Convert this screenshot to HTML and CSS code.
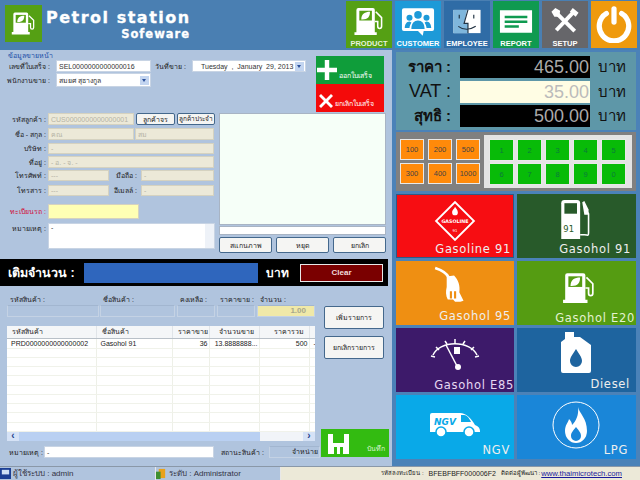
FILE: index.html
```html
<!DOCTYPE html>
<html lang="th">
<head>
    <meta charset="UTF-8">
    <title>Petrol station</title>
    <link rel="stylesheet" href="styles.css">
</head>
<body>
<svg class="defs" width="0" height="0">
    <symbol id="pump" viewBox="0 0 32 32">
        <path fill="#fff" d="M5 2h15a2 2 0 0 1 2 2v23H3V4a2 2 0 0 1 2-2zM1 27h23v3H1z"/>
        <path fill="currentColor" d="M6 5h13v10H6z"/>
        <path fill="#fff" d="M8 14c0-6 4-8 9-8 0 5-2 8-8 8z"/>
        <path fill="none" stroke="#fff" stroke-width="1.6" d="M23 6l6 6v9c0 3-4 3-4 0v-5h-3"/>
    </symbol>
</svg>

<header class="top">
    <svg class="logo"><use href="#pump" x="6" y="5" width="25" height="27"/></svg>
    <div class="brand">
        <div class="brand-main">Petrol station</div>
        <div class="brand-sub">Sofeware</div>
    </div>
    <nav class="nav">
        <a class="nav-item nav-product">
            <svg class="nav-icon" viewBox="0 0 32 32"><use href="#pump"/></svg>
            <span>PRODUCT</span>
        </a>
        <a class="nav-item nav-customer">
            <svg class="nav-icon" viewBox="0 0 36 32">
                <path fill="#fff" d="M3 2h30a2 2 0 0 1 2 2v20a2 2 0 0 1-2 2H24l-1 5-5-5H3a2 2 0 0 1-2-2V4a2 2 0 0 1 2-2z"/>
                <g fill="#1d9ad8"><circle cx="18" cy="9" r="4"/><circle cx="9" cy="12" r="3.2"/><circle cx="27" cy="12" r="3.2"/><path d="M11 24c0-6 3-9 7-9s7 3 7 9zM4 23c0-4 2-7 5-7l2 1c-1 2-2 4-2 6zM32 23c0-4-2-7-5-7l-2 1c1 2 2 4 2 6z"/></g>
            </svg>
            <span>CUSTOMER</span>
        </a>
        <a class="nav-item nav-employee">
            <svg class="nav-icon" viewBox="0 0 32 32">
                <path fill="#fff" d="M2 4h28v24H2z"/>
                <path fill="#7fb6dc" d="M2 4h14l-3 14h4v10H2z"/>
                <path fill="none" stroke="#234" stroke-width="1.2" d="M17 4l-4 14h4v10M8 9v4M23 9v4M7 21c5 4 12 4 18 0"/>
            </svg>
            <span>EMPLOYEE</span>
        </a>
        <a class="nav-item nav-report">
            <svg class="nav-icon" viewBox="0 0 36 32">
                <path fill="#fff" d="M1 4h34v24H1z"/>
                <path fill="#0f9a50" d="M6 10h24v2.500H6zM6 15h24v2.500H6zM6 20h15v2.500H6z"/>
            </svg>
            <span>REPORT</span>
        </a>
        <a class="nav-item nav-setup">
            <svg class="nav-icon" viewBox="0 0 32 32">
                <path fill="none" stroke="#fff" stroke-width="4" d="M7 7l19 19"/>
                <path fill="none" stroke="#fff" stroke-width="4" d="M26 5L7 25"/>
                <path fill="#fff" d="M2 6l4-4 5 3-1 6-5 0zM24 2l6 5-3 4-6-5z"/>
            </svg>
            <span>SETUP</span>
        </a>
        <a class="nav-item nav-power">
            <svg class="power-icon" viewBox="0 0 40 40">
                <path fill="none" stroke="#fff" stroke-width="5.500" stroke-linecap="round" d="M12 9a15.500 15.500 0 1 0 16 0"/>
                <path fill="none" stroke="#fff" stroke-width="5.500" stroke-linecap="round" d="M20 4v14"/>
            </svg>
        </a>
    </nav>
</header>

<main class="main">
    <section class="left">
        <div class="sale-top">
            <div class="sale-info">
                <div class="group-title">ข้อมูลขายหน้า</div>
                <div class="row row-bill">
                    <label class="lbl lbl-bill">เลขที่ใบเสร็จ :</label>
                    <div class="box box-white w-bill">SEL0000000000000016</div>
                    <label class="lbl lbl-date">วันที่ขาย :</label>
                    <div class="box box-white date">
                        <span>Tuesday &nbsp;, &nbsp;January &nbsp;29, 2013</span>
                        <i class="combo-btn"></i>
                    </div>
                </div>
                <div class="row row-seller">
                    <label class="lbl lbl-bill">พนักงานขาย :</label>
                    <div class="box box-white w-bill seller">
                        <span>สมยศ สุธางกูล</span>
                        <i class="combo-btn"></i>
                    </div>
                </div>
            </div>
            <div class="actions">
                <button class="act act-ok">
                    <svg class="act-icon" viewBox="0 0 18 18"><path fill="#fff" d="M7 0h4v7h7v4h-7v7H7v-7H0V7h7z"/></svg>
                    <span>ออกใบเสร็จ</span>
                </button>
                <button class="act act-cancel">
                    <svg class="act-icon act-x" viewBox="0 0 14 14"><path fill="#fff" d="M2 0l5 5 5-5 2 2-5 5 5 5-2 2-5-5-5 5-2-2 5-5-5-5z"/></svg>
                    <span>ยกเลิกใบเสร็จ</span>
                </button>
            </div>
        </div>

        <div class="cust">
            <div class="cust-form">
                <div class="row r-code">
                    <label class="lbl">รหัสลูกค้า :</label>
                    <div class="box box-ro w-code">CUS0000000000000001</div>
                    <button class="btn btn-a">ลูกค้าจร</button>
                    <button class="btn btn-b">ลูกค้าประจำ</button>
                </div>
                <div class="row r-name">
                    <label class="lbl">ชื่อ - สกุล :</label>
                    <div class="box box-ro w-code">คณ</div>
                    <div class="box box-ro w-last">สม</div>
                </div>
                <div class="row r-comp">
                    <label class="lbl">บริษัท :</label>
                    <div class="box box-ro w-full">-</div>
                </div>
                <div class="row r-addr">
                    <label class="lbl">ที่อยู่ :</label>
                    <div class="box box-ro w-full">- อ. - จ. -</div>
                </div>
                <div class="row r-tel">
                    <label class="lbl">โทรศัพท์ :</label>
                    <div class="box box-ro w-tel">---</div>
                    <label class="lbl lbl-mid">มือถือ :</label>
                    <div class="box box-ro w-mob">-</div>
                </div>
                <div class="row r-fax">
                    <label class="lbl">โทรสาร :</label>
                    <div class="box box-ro w-tel">---</div>
                    <label class="lbl lbl-mid">อีเมลล์ :</label>
                    <div class="box box-ro w-mob">-</div>
                </div>
                <div class="row r-plate">
                    <label class="lbl lbl-red">ทะเบียนรถ :</label>
                    <div class="box box-plate"></div>
                </div>
                <div class="row r-note">
                    <label class="lbl">หมายเหตุ :</label>
                    <div class="box box-white note">-<i class="note-bar"></i></div>
                </div>
            </div>
            <div class="cust-side">
                <div class="scan-view"></div>
                <div class="scan-input"></div>
                <div class="scan-btns">
                    <button class="btn">สแกนภาพ</button>
                    <button class="btn">หยุด</button>
                    <button class="btn">ยกเลิก</button>
                </div>
            </div>
        </div>

        <div class="fill-bar">
            <strong class="fill-label">เติมจำนวน :</strong>
            <div class="fill-value"></div>
            <strong class="fill-unit">บาท</strong>
            <button class="fill-clear">Clear</button>
        </div>

        <div class="items">
            <div class="items-body">
                <div class="item-entry">
                    <div class="entry e1"><label>รหัสสินค้า :</label><div class="entry-box"></div></div>
                    <div class="entry e2"><label>ชื่อสินค้า :</label><div class="entry-box"></div></div>
                    <div class="entry e3"><label>คงเหลือ :</label><div class="entry-box"></div></div>
                    <div class="entry e4"><label>ราคาขาย :</label><div class="entry-box"></div></div>
                    <div class="entry e5"><label>จำนวน :</label><div class="entry-box entry-qty">1.00</div></div>
                </div>
                <div class="grid-wrap">
                    <table class="grid">
                        <colgroup>
                            <col class="c1"><col class="c2"><col class="c3"><col class="c4"><col class="c5"><col class="c6">
                        </colgroup>
                        <thead>
                            <tr><th>รหัสสินค้า</th><th>ชื่อสินค้า</th><th class="num">ราคาขาย</th><th class="num">จำนวนขาย</th><th class="num">ราคารวม</th><th></th></tr>
                        </thead>
                        <tbody>
                            <tr><td>PRD0000000000000002</td><td>Gasohol 91</td><td class="num">36</td><td class="num">13.8888888...</td><td class="num">500</td><td>-</td></tr>
                            <tr><td></td><td></td><td></td><td></td><td></td><td></td></tr>
                            <tr><td></td><td></td><td></td><td></td><td></td><td></td></tr>
                            <tr><td></td><td></td><td></td><td></td><td></td><td></td></tr>
                            <tr><td></td><td></td><td></td><td></td><td></td><td></td></tr>
                            <tr><td></td><td></td><td></td><td></td><td></td><td></td></tr>
                            <tr><td></td><td></td><td></td><td></td><td></td><td></td></tr>
                            <tr><td></td><td></td><td></td><td></td><td></td><td></td></tr>
                            <tr><td></td><td></td><td></td><td></td><td></td><td></td></tr>
                            <tr><td></td><td></td><td></td><td></td><td></td><td></td></tr>
                        </tbody>
                    </table>
                    <div class="hscroll">
                        <i class="arrow">&lsaquo;</i>
                        <div class="hscroll-thumb"></div>
                        <i class="arrow">&rsaquo;</i>
                    </div>
                </div>
                <div class="item-foot">
                    <label class="foot-lbl">หมายเหตุ :</label>
                    <div class="box box-white foot-note">-</div>
                    <label class="foot-lbl foot-status">สถานะสินค้า :</label>
                    <div class="foot-sell">จำหน่าย</div>
                </div>
            </div>
            <div class="items-side">
                <button class="btn side-btn">เพิ่มรายการ</button>
                <button class="btn side-btn">ยกเลิกรายการ</button>
                <button class="save">
                    <svg class="save-icon" viewBox="0 0 21 20"><path fill="#fff" d="M0 0h5v9h11V0h5v20H0zM6 13v7h3v-7zM12 13v7h3v-7z"/></svg>
                    <span>บันทึก</span>
                </button>
            </div>
        </div>
    </section>

    <section class="right">
        <div class="price">
            <div class="price-row"><span class="price-lbl price-th">ราคา :</span><span class="price-val">465.00</span><span class="price-unit">บาท</span></div>
            <div class="price-row"><span class="price-lbl">VAT :</span><span class="price-val price-vat">35.00</span><span class="price-unit">บาท</span></div>
            <div class="price-row"><span class="price-lbl price-th">สุทธิ :</span><span class="price-val">500.00</span><span class="price-unit">บาท</span></div>
        </div>

        <div class="pad">
            <div class="pad-amount">
                <button class="key key-o">100</button><button class="key key-o">200</button><button class="key key-o">500</button>
                <button class="key key-o">300</button><button class="key key-o">400</button><button class="key key-o">1000</button>
            </div>
            <div class="pad-digits">
                <button class="key key-g">1</button><button class="key key-g">2</button><button class="key key-g">3</button><button class="key key-g">4</button><button class="key key-g">5</button>
                <button class="key key-g">6</button><button class="key key-g">7</button><button class="key key-g">8</button><button class="key key-g">9</button><button class="key key-g">0</button>
            </div>
        </div>

        <div class="fuels">
            <div class="fuel f-g91">
                <svg class="fuel-icon" viewBox="0 0 44 44">
                    <rect x="8" y="8" width="28" height="28" transform="rotate(45 22 22)" fill="none" stroke="#fff" stroke-width="2"/>
                    <path fill="#fff" d="M22 7c1 2 3 3 3 6a3 3 0 0 1-6 0c0-3 2-3 3-6z"/>
                    <text x="22" y="24.500" class="diamond-text">GASOLINE</text>
                    <text x="22" y="34" class="diamond-num">91</text>
                </svg>
                <span>Gasoline 91</span>
            </div>
            <div class="fuel f-g91h">
                <svg class="fuel-icon" viewBox="0 0 30 40">
                    <path fill="#fff" d="M3 1h12a3 3 0 0 1 3 3v34H0V4a3 3 0 0 1 3-3z"/>
                    <path fill="#285a2a" d="M3 4h12v10H3z"/>
                    <text x="2" y="31" class="pump-num">91</text>
                    <path fill="none" stroke="#fff" stroke-width="1.500" d="M18 34h4c3 0 4 2 4-2V14l-3-4"/>
                    <path fill="#fff" d="M20 3l2-1 4 8v5h-4z"/>
                </svg>
                <span>Gasohol 91</span>
            </div>
            <div class="fuel f-g95">
                <svg class="fuel-icon" viewBox="0 0 36 40">
                    <path fill="none" stroke="#fff" stroke-width="2.500" d="M1 2c6 2 11 5 13 9"/>
                    <path fill="#fff" d="M12 10l7-1c4 4 6 10 5 16l4 8-3 1h-5l-2-2h-5c-2-4-2-8-1-12z"/>
                    <path fill="#ef8f12" d="M15 24h2v7h-2zM19 24h2v7h-2z"/>
                </svg>
                <span>Gasohol 95</span>
            </div>
            <div class="fuel f-e20">
                <svg class="fuel-icon f-e20-icon" viewBox="0 0 32 32"><use href="#pump"/></svg>
                <span>Gasohol E20</span>
            </div>
            <div class="fuel f-e85">
                <svg class="fuel-icon" viewBox="0 0 50 34">
                    <path fill="none" stroke="#fff" stroke-width="1.500" d="M3 18a23 16 0 0 1 44 0"/>
                    <path fill="none" stroke="#fff" stroke-width="1.500" d="M1 19l4 1M6 10l3 3M15 4l2 3M25 2v4M35 4l-2 3M44 10l-3 3M49 19l-4 1"/>
                    <path fill="none" stroke="#fff" stroke-width="1.500" d="M16 8l11 21"/>
                    <circle cx="28" cy="30" r="3" fill="#fff"/>
                    <path fill="#fff" d="M24 10h6v7h-6z"/>
                </svg>
                <span>Gasohol E85</span>
            </div>
            <div class="fuel f-diesel">
                <svg class="fuel-icon" viewBox="0 0 32 42">
                    <path fill="#fff" fill-rule="evenodd" d="M5 0h9v5h6l11 8v26a2 2 0 0 1-2 2H3a2 2 0 0 1-2-2V10l4-3zM16 17c-3 5-6 8-6 12a6 6 0 0 0 12 0c0-4-3-7-6-12z"/>
                </svg>
                <span>Diesel</span>
            </div>
            <div class="fuel f-ngv">
                <svg class="fuel-icon" viewBox="0 0 52 26">
                    <path fill="#fff" d="M3 2h28c6 0 11 5 15 12 3 1 5 3 5 6v1H1V4a2 2 0 0 1 2-2z"/>
                    <path fill="#09a9e8" d="M32 4h3c3 0 5 3 7 7H32z"/>
                    <circle cx="12" cy="21" r="5" fill="#fff" stroke="#09a9e8" stroke-width="1.500"/>
                    <circle cx="40" cy="21" r="5" fill="#fff" stroke="#09a9e8" stroke-width="1.500"/>
                    <text x="5" y="14" class="ngv-text">NGV</text>
                </svg>
                <span>NGV</span>
            </div>
            <div class="fuel f-lpg">
                <svg class="fuel-icon" viewBox="0 0 48 48">
                    <circle cx="24" cy="24" r="23" fill="none" stroke="#fff" stroke-width="1"/>
                    <path fill="#fff" fill-rule="evenodd" d="M26 6c1 6 9 11 9 24a11 12 0 0 1-22 0c0-6 3-8 4-12 2 2 3 4 3 6 4-4 7-10 6-18zM24 26c-2 3-5 5-5 9a5 5 0 0 0 10 0c0-4-3-6-5-9z"/>
                </svg>
                <span>LPG</span>
            </div>
        </div>
    </section>
</main>

<footer class="status">
    <div class="status-cell st-user">
        <svg class="st-icon" viewBox="0 0 12 12"><path fill="#1c3f94" d="M0 0h12v12H0z"/><path fill="#cfe0f5" d="M2 2h8v5H2z"/></svg>
        <span>ผู้ใช้ระบบ : admin</span>
    </div>
    <div class="status-cell st-level">
        <svg class="st-icon" viewBox="0 0 12 12"><path fill="#e9a21b" d="M3 1h7v10H3z"/><path fill="#3f8f2f" d="M0 4h5v8H0z"/></svg>
        <span>ระดับ : Administrator</span>
    </div>
    <div class="status-info">
        <span class="status-th">รหัสลงทะเบียน :</span>
        <span class="status-key">BFEBFBFF000006F2</span>
        <span class="status-th">ติดต่อผู้พัฒนา :</span>
        <a class="status-link">www.thaimicrotech.com</a>
    </div>
</footer>
</body>
</html>
```

FILE: styles.css
```css
/* Page */
* {
    box-sizing: border-box;
}
body {
    margin: 0;
    width: 640px;
    height: 480px;
    overflow: hidden;
    background-color: #4b82b8;
    font-family: "Liberation Sans", "Noto Sans", sans-serif;
    font-size: 7px;
    color: #222;
}
button {
    font-family: inherit;
    padding: 0;
    cursor: pointer;
    white-space: nowrap;
}
label {
    white-space: nowrap;
}
.defs {
    display: block;
    height: 0;
}

/* Header */
.top {
    display: flex;
    height: 50px;
    background-color: #4a7fb2;
}
.logo {
    width: 37px;
    height: 37px;
    margin: 5px 0 0 5px;
    color: #55a014;
    background-color: #55a014;
}
.brand {
    width: 144px;
    margin: 8px 0 0 4px;
    color: #fff;
    font-family: "DejaVu Sans", sans-serif;
    font-weight: bold;
    text-align: right;
    -webkit-text-stroke: 0.3px #fff;
}
.brand-main {
    font-size: 16px;
    line-height: 19px;
    letter-spacing: 1.500px;
    white-space: nowrap;
}
.brand-sub {
    font-size: 11.500px;
    line-height: 14px;
    letter-spacing: 1px;
}
.nav {
    display: flex;
    margin-left: auto;
    padding: 1px 3px 0 0;
    gap: 3px;
}
.nav-item {
    display: flex;
    flex-direction: column;
    align-items: center;
    width: 46px;
    height: 47px;
    color: #fff;
    font-family: "Liberation Sans", sans-serif;
    font-size: 7.500px;
    font-weight: bold;
    line-height: 9px;
    padding-top: 5px;
    white-space: nowrap;
}
.nav-icon {
    width: 34px;
    height: 31px;
    margin-bottom: 2px;
}
.nav-product {
    background-color: #55a014;
    color: #e8f3dc;
}
.nav-product .nav-icon {
    color: #55a014;
}
.nav-customer {
    background-color: #1d9ad8;
}
.nav-employee {
    background-color: #2f6ca6;
}
.nav-report {
    background-color: #0f9a50;
}
.nav-setup {
    background-color: #66666a;
}
.nav-power {
    background-color: #ef9a0d;
    padding-top: 4px;
}
.power-icon {
    width: 38px;
    height: 38px;
}

/* Main split */
.main {
    display: flex;
    height: 416px;
}
.left {
    width: 392px;
    background-color: #b0c4de;
}
.right {
    width: 248px;
    padding: 2px 4px 0;
}

/* Form basics */
.row {
    display: flex;
    align-items: center;
}
.lbl {
    width: 46px;
    flex: none;
    margin-right: 2px;
    text-align: right;
}
.box {
    display: flex;
    align-items: center;
    flex: none;
    height: 100%;
    padding-left: 2px;
    overflow: hidden;
    white-space: nowrap;
}
.box-white {
    background-color: #fff;
    border: 1px solid #c8d4e4;
    color: #333;
}
.box-ro {
    background-color: #ece9d8;
    border: 1px solid #d5d2c0;
    color: #b5b3a5;
}
.btn {
    background-color: #f5f5f3;
    border: 1px solid #44688c;
    border-radius: 2px;
    font-size: 7px;
    color: #222;
}

/* Sale header */
.sale-top {
    display: flex;
    height: 62px;
}
.sale-info {
    width: 316px;
}
.group-title {
    height: 10px;
    padding: 2px 0 0 8px;
    color: #1c4fa8;
    line-height: 8px;
}
.row-bill {
    height: 12px;
    margin-bottom: 1px;
}
.row-seller {
    height: 14px;
}
.lbl-bill {
    width: 50px;
    margin-right: 6px;
}
.w-bill {
    width: 95px;
}
.lbl-date {
    width: 35px;
    margin-right: 6px;
}
.date {
    width: 114px;
    justify-content: space-between;
    padding-left: 8px;
    padding-right: 1px;
}
.seller {
    justify-content: space-between;
    padding-right: 1px;
}
.combo-btn {
    width: 9px;
    height: 9px;
    background-color: #c3d5f0;
    position: relative;
}
.combo-btn::after {
    content: "";
    position: absolute;
    left: 2px;
    top: 3px;
    border-left: 2.500px solid transparent;
    border-right: 2.500px solid transparent;
    border-top: 3px solid #2a4f99;
}
.actions {
    width: 68px;
    padding-top: 6px;
}
.act {
    display: flex;
    align-items: flex-end;
    width: 100%;
    height: 28px;
    border: none;
    color: #fff;
    font-size: 7px;
    white-space: nowrap;
    padding: 0 0 3px 0;
}
.act-ok {
    background-color: #0f9d3a;
}
.act-cancel {
    background-color: #f40a0a;
}
.act-icon {
    width: 20px;
    height: 20px;
    flex: none;
    margin: 0 2px 1px 1px;
}
.act-x {
    width: 14px;
    height: 14px;
    margin: 0 2px 1px 3px;
}

/* Customer */
.cust {
    display: flex;
    height: 147px;
    padding-top: 1px;
}
.cust-form {
    width: 219px;
}
.w-code {
    width: 86px;
}
.w-last {
    width: 79px;
    margin-left: 1px;
}
.w-full {
    width: 166px;
}
.w-tel {
    width: 61px;
}
.w-mob {
    width: 73px;
}
.lbl-mid {
    width: 28px;
    margin-right: 4px;
}
.btn-a {
    width: 39px;
    height: 12px;
    margin-left: 2px;
}
.btn-b {
    width: 38px;
    height: 12px;
    margin-left: 2px;
    font-size: 6.500px;
}
.r-code {
    height: 12px;
    margin-bottom: 3px;
}
.r-name {
    height: 12px;
    margin-bottom: 3px;
}
.r-comp {
    height: 11px;
    margin-bottom: 2px;
}
.r-addr {
    height: 12px;
    margin-bottom: 2px;
}
.r-tel {
    height: 11px;
    margin-bottom: 4px;
}
.r-fax {
    height: 11px;
    margin-bottom: 8px;
}
.r-plate {
    height: 15px;
    margin-bottom: 4px;
}
.r-note {
    height: 26px;
    align-items: flex-start;
}
.lbl-red {
    color: #d0103a;
}
.box-plate {
    width: 91px;
    background-color: #ffffb4;
    border: 1px solid #d5d2c0;
}
.note {
    width: 167px;
    position: relative;
    align-items: flex-start;
}
.note-bar {
    position: absolute;
    right: 0;
    top: 0;
    bottom: 0;
    width: 9px;
    background-color: #eef2f8;
}
.cust-side {
    width: 167px;
}
.scan-view {
    height: 112px;
    background-color: #f6fff8;
    border: 1px solid #a8b4c4;
}
.scan-input {
    height: 9px;
    margin-top: 1px;
    background-color: #fff;
    border: 1px solid #a8b4c4;
}
.scan-btns {
    display: flex;
    justify-content: space-between;
    margin-top: 2px;
}
.scan-btns .btn {
    width: 53px;
    height: 16px;
}

/* Black amount bar */
.fill-bar {
    display: flex;
    align-items: center;
    width: 388px;
    height: 27px;
    background-color: #000;
    color: #fff;
}
.fill-label {
    width: 84px;
    padding-left: 8px;
    font-size: 12.500px;
    white-space: nowrap;
}
.fill-value {
    width: 174px;
    height: 20px;
    background-color: #2f66bd;
}
.fill-unit {
    width: 42px;
    padding-left: 8px;
    font-size: 12px;
}
.fill-clear {
    width: 83px;
    height: 18px;
    background-color: #7a0000;
    border: 1px solid #e8e8e8;
    color: #f0dcdc;
    font-size: 8px;
    font-weight: bold;
}

/* Item list */
.items {
    display: flex;
    height: 176px;
    padding: 4px 0 0 7px;
}
.items-body {
    width: 308px;
}
.item-entry {
    display: flex;
    height: 36px;
    gap: 1px;
}
.entry label {
    display: block;
    height: 15px;
    padding: 6px 0 0 3px;
    line-height: 7px;
}
.entry-box {
    height: 12px;
    background-color: #b0c4de;
    border: 1px solid #c4d2e4;
    border-top-color: #a2b6d0;
}
.entry-qty {
    background-color: #f0e9a8;
    color: #a8a88c;
    font-size: 8px;
    font-weight: bold;
    text-align: right;
    padding-right: 8px;
    line-height: 10px;
}
.e1 {
    width: 92px;
}
.e2 {
    width: 75px;
}
.e3 {
    width: 38px;
    margin-left: 1px;
}
.e4 {
    width: 38px;
    margin-left: 1px;
}
.e5 {
    width: 58px;
    margin-left: 1px;
}
.grid-wrap {
    height: 115px;
    background-color: #fff;
    overflow: hidden;
}
.grid {
    width: 308px;
    height: 106px;
    table-layout: fixed;
    border-collapse: collapse;
}
.c1 {
    width: 89px;
}
.c2 {
    width: 76px;
}
.c3 {
    width: 37px;
}
.c4 {
    width: 50px;
}
.c5 {
    width: 50px;
}
.c6 {
    width: 6px;
}
.grid th {
    height: 12px;
    padding: 0 5px;
    font-size: 7px;
    font-weight: normal;
    text-align: left;
    background-color: #f4f6f8;
    border-right: 1px solid #e0e4e8;
    border-bottom: 1px solid #b8c0c8;
    white-space: nowrap;
    overflow: hidden;
}
.grid td {
    height: 9px;
    padding: 0 1px 0 4px;
    line-height: 9px;
    border-right: 1px solid #eef0e8;
    border-bottom: 1px solid #f0f2ea;
    white-space: nowrap;
    overflow: hidden;
}
.grid .num {
    text-align: right;
}
.hscroll {
    display: flex;
    height: 9px;
    background-color: #f1f4f8;
}
.arrow {
    width: 12px;
    color: #24408c;
    font-size: 10px;
    font-style: normal;
    font-weight: bold;
    line-height: 8px;
    text-align: center;
    background-color: #d5e2f6;
}
.hscroll-thumb {
    width: 241px;
    margin-right: auto;
    background-color: #b9d0f2;
}
.item-foot {
    display: flex;
    align-items: center;
    height: 12px;
    margin-top: 5px;
}
.foot-lbl {
    width: 37px;
    flex: none;
    text-align: right;
    margin-right: 1px;
    margin-left: -1px;
}
.foot-note {
    width: 170px;
}
.foot-status {
    width: 43px;
    margin-left: 7px;
    margin-right: 5px;
}
.foot-sell {
    width: 51px;
    height: 12px;
    flex: none;
    text-align: right;
    padding-right: 1px;
    line-height: 10px;
    border: 1px solid #c4d2e4;
    border-top-color: #a2b6d0;
}
.items-side {
    display: flex;
    flex-direction: column;
    width: 70px;
    padding-left: 9px;
}
.side-btn {
    width: 60px;
    height: 23px;
    flex: none;
    margin-top: 16px;
}
.side-btn + .side-btn {
    margin-top: 7px;
}
.save {
    display: flex;
    align-items: flex-end;
    justify-content: space-between;
    flex: none;
    width: 68px;
    height: 28px;
    margin: 70px 0 0 -3px;
    padding: 4px 4px 3px 7px;
    background-color: #33bb11;
    border: none;
    color: #d8f5d0;
    font-size: 7px;
}
.save-icon {
    width: 21px;
    height: 20px;
}

/* Price panel */
.price {
    height: 78px;
    padding: 4px 0 0 0;
    background-color: #5e97a8;
}
.price-row {
    display: flex;
    align-items: center;
    height: 22px;
    margin-bottom: 2.500px;
    font-size: 18px;
    color: #111;
}
.price-lbl {
    width: 64px;
    padding-right: 9px;
    text-align: right;
    white-space: nowrap;
}
.price-th {
    font-size: 15px;
    font-weight: bold;
}
.price-val {
    width: 130px;
    height: 22px;
    background-color: #000;
    color: #aaa;
    font-size: 18px;
    line-height: 22px;
    text-align: right;
    padding-right: 1px;
}
.price-vat {
    background-color: #fffde4;
    color: #bbb;
}
.price-unit {
    margin-left: 8px;
    font-size: 15px;
}

/* Keypad */
.pad {
    display: flex;
    height: 59px;
    margin-top: 2px;
    padding: 3px 4px 3px 4px;
    background-color: #808080;
}
.pad-amount {
    display: grid;
    grid-template-columns: repeat(3, 24px);
    grid-auto-rows: 21px;
    column-gap: 4px;
    row-gap: 3px;
    width: 84px;
    padding-top: 4px;
}
.pad-digits {
    display: grid;
    grid-template-columns: repeat(5, 25px);
    grid-auto-rows: 22px;
    gap: 2px 3px;
    flex: 1;
    padding: 4px 5px;
    background-color: #e4e4e4;
}
.key {
    border: 1px solid #e8e8e8;
    font-size: 7.500px;
    padding: 0;
}
.key-o {
    background-color: #ff8a0a;
    color: #444;
}
.key-g {
    background-color: #08bb08;
    color: #0a7a3c;
}

/* Fuel tiles */
.fuels {
    display: grid;
    grid-template-columns: 118px 119px;
    grid-auto-rows: 64px;
    gap: 3px;
    margin-top: 3px;
}
.fuel {
    display: flex;
    flex-direction: column;
    align-items: center;
    position: relative;
    padding-top: 5px;
    color: #eee;
    font-family: "DejaVu Sans", sans-serif;
    font-size: 11.500px;
    letter-spacing: 0.700px;
    white-space: nowrap;
}
.fuel span {
    position: absolute;
    right: 2px;
    bottom: 1px;
    line-height: 13px;
}
.fuel-icon {
    width: 44px;
    height: 42px;
}
.f-g91 {
    background-color: #f70d12;
    border: 1px solid #2d5a86;
}
.f-g91h {
    background-color: #285a2a;
}
.f-g91h span {
    right: 5px;
    bottom: 2px;
}
.f-g95 {
    background-color: #ef8f12;
    padding-right: 4px;
}
.f-g95 span {
    right: 3px;
    bottom: 2px;
}
.f-e20 {
    background-color: #559c12;
    padding: 10px 0 0 4px;
    color: #e4f2d0;
}
.f-e20 span {
    right: 1px;
    bottom: 0;
}
.f-e20-icon {
    width: 34px;
    height: 34px;
    color: #559c12;
}
.f-e85 {
    background-color: #3d1a6a;
    padding-top: 8px;
    color: #e6d8f2;
}
.f-e85 .fuel-icon {
    width: 50px;
    height: 36px;
}
.f-e85 span {
    right: 0;
    bottom: 0;
}
.f-diesel {
    background-color: #1e649f;
    padding-right: 2px;
    padding-top: 4px;
}
.f-diesel span {
    right: 6px;
}
.f-ngv {
    background-color: #09a9e8;
    padding-top: 16px;
}
.f-ngv .fuel-icon {
    width: 54px;
    height: 26px;
}
.f-ngv span {
    right: 4px;
    bottom: 2px;
}
.f-lpg {
    background-color: #1a86d8;
    padding: 6px 2px 0 0;
}
.f-lpg .fuel-icon {
    width: 48px;
    height: 48px;
}
.f-lpg span {
    right: 8px;
    bottom: 2px;
}
.diamond-text {
    fill: #fff;
    font-size: 5px;
    font-weight: bold;
    text-anchor: middle;
    letter-spacing: 0;
}
.diamond-num {
    fill: #fff;
    font-size: 4px;
    text-anchor: middle;
    letter-spacing: 0;
}
.pump-num {
    fill: #285a2a;
    font-size: 8px;
    letter-spacing: 0;
}
.ngv-text {
    fill: #09a9e8;
    font-size: 9px;
    font-weight: bold;
    font-style: italic;
    letter-spacing: 0;
}

/* Status bar */
.status {
    display: flex;
    height: 14px;
    background-color: #ece9d8;
    border-top: 1px solid #8a98a8;
    font-size: 7px;
    line-height: 13px;
}
.status-cell {
    display: flex;
    align-items: center;
    gap: 2px;
    height: 13px;
    background-color: #b0c4de;
    border-right: 1px solid #e8e8e8;
    font-size: 8px;
    color: #334;
}
.st-user {
    width: 156px;
}
.st-level {
    width: 125px;
}
.st-icon {
    width: 11px;
    height: 11px;
}
.status-info {
    display: flex;
    flex: 1;
    justify-content: flex-end;
    gap: 5px;
    padding-right: 18px;
    white-space: nowrap;
}
.status-th {
    font-size: 6px;
}
.status-link {
    margin-left: -4px;
    color: #1a1a9c;
    font-size: 7.700px;
    text-decoration: underline;
}
```
